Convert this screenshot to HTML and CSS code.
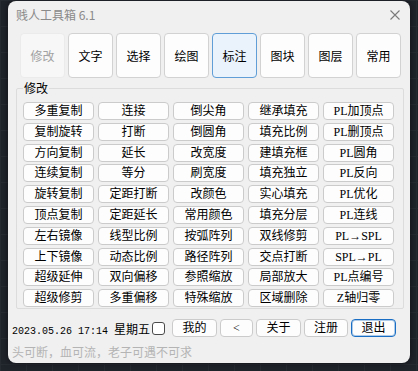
FILE: index.html
```html
<!DOCTYPE html>
<html lang="zh-CN">
<head>
    <meta charset="UTF-8">
    <meta name="viewport" content="width=device-width, initial-scale=1.0">
    <title>贱人工具箱 6.1</title>
    <link rel="stylesheet" href="styles.css">
</head>
<body>
    <div class="window">
        <div class="titlebar">
            <span class="title">贱人工具箱 6.1</span>
            <svg class="close" width="10" height="10" viewBox="0 0 10 10">
                <path d="M0.5 0.5 L9.5 9.5 M9.5 0.5 L0.5 9.5" stroke="#7a7a7a" stroke-width="1.1" fill="none"/>
            </svg>
        </div>

        <div class="tabs">
            <button class="tab disabled">修改</button>
            <button class="tab">文字</button>
            <button class="tab">选择</button>
            <button class="tab">绘图</button>
            <button class="tab active">标注</button>
            <button class="tab">图块</button>
            <button class="tab">图层</button>
            <button class="tab">常用</button>
        </div>

        <fieldset class="group">
            <legend>修改</legend>
            <div class="cmd-grid">
                <button>多重复制</button><button>连接</button><button>倒尖角</button><button>继承填充</button><button>PL加顶点</button>
                <button>复制旋转</button><button>打断</button><button>倒圆角</button><button>填充比例</button><button>PL删顶点</button>
                <button>方向复制</button><button>延长</button><button>改宽度</button><button>建填充框</button><button>PL圆角</button>
                <button>连续复制</button><button>等分</button><button>刷宽度</button><button>填充独立</button><button>PL反向</button>
                <button>旋转复制</button><button>定距打断</button><button>改颜色</button><button>实心填充</button><button>PL优化</button>
                <button>顶点复制</button><button>定距延长</button><button>常用颜色</button><button>填充分层</button><button>PL连线</button>
                <button>左右镜像</button><button>线型比例</button><button>按弧阵列</button><button>双线修剪</button><button>PL→SPL</button>
                <button>上下镜像</button><button>动态比例</button><button>路径阵列</button><button>交点打断</button><button>SPL→PL</button>
                <button>超级延伸</button><button>双向偏移</button><button>参照缩放</button><button>局部放大</button><button>PL点编号</button>
                <button>超级修剪</button><button>多重偏移</button><button>特殊缩放</button><button>区域删除</button><button>Z轴归零</button>
            </div>
        </fieldset>

        <div class="status-row">
            <span class="datetime"><span class="digits">2023.05.26 17:14 </span>星期五</span>
            <span class="check"></span>
            <button class="small mine">我的</button>
            <button class="small back">&lt;</button>
            <button class="small">关于</button>
            <button class="small reg">注册</button>
            <button class="small quit">退出</button>
        </div>

        <p class="motto">头可断，血可流，老子可遇不可求</p>
    </div>
</body>
</html>
```

FILE: styles.css
```css
body {
    margin: 0;
    width: 418px;
    height: 371px;
    overflow: hidden;
    background-color: #1f232a;
    background-image:
        linear-gradient(#262b32 1px, transparent 1px),
        linear-gradient(90deg, #262b32 1px, transparent 1px);
    background-size: 26px 26px;
    font-family: "Noto Sans CJK SC", sans-serif;
    font-size: 12px;
}

.window {
    margin: 1px 0 0 8px;
    width: 402px;
    height: 362px;
    background-color: #f0f0f0;
    border-radius: 8px;
    box-shadow: 0 0 6px rgba(0, 0, 0, 0.5);
    box-sizing: border-box;
}

.titlebar {
    height: 28px;
    display: flex;
    align-items: center;
    justify-content: space-between;
    padding: 0 10px 0 8px;
}

.title {
    color: #8a8a8a;
    font-size: 12px;
    line-height: 16px;
}

.tabs {
    display: flex;
    gap: 3px;
    margin-top: 4px;
    padding-left: 12px;
}

.tab {
    width: 45px;
    height: 45px;
    padding: 0;
    background-color: #fdfdfd;
    border: 1px solid #d2d2d2;
    border-radius: 4px;
    font-family: "Noto Sans CJK SC", sans-serif;
    font-size: 12px;
    color: #000;
}

.tab.disabled {
    background-color: #f7f7f7;
    border-color: #ebebeb;
    color: #a2a2a2;
}

.tab.active {
    background-color: #eaf2fb;
    border-color: #5f9ed6;
}

.group {
    margin: 2px 0 0 8px;
    width: 388px;
    padding: 6px 9px 1px 6px;
    border: 1px solid #dcdcdc;
    border-radius: 2px;
    box-sizing: border-box;
}

.group legend {
    padding: 0 1px;
    margin-left: 0;
    line-height: 16px;
    font-size: 12px;
    color: #000;
}

.cmd-grid {
    display: grid;
    grid-template-columns: repeat(5, 71px);
    grid-template-rows: repeat(10, 18px);
    column-gap: 4px;
    row-gap: 2.8px;
}

.cmd-grid button,
.small {
    height: 18px;
    padding: 0;
    background-color: #fdfdfd;
    border: 1px solid #cbcbcb;
    border-radius: 4px;
    font-family: "Liberation Serif", "Noto Sans CJK SC", serif;
    font-size: 12px;
    line-height: 16px;
    color: #000;
}

.status-row {
    display: flex;
    align-items: center;
    margin-top: 10px;
    padding-left: 4px;
    height: 18px;
}

.datetime {
    width: 140px;
    font-size: 12px;
    color: #000;
    white-space: nowrap;
}

.digits {
    font-family: "Liberation Mono", monospace;
    font-size: 10px;
}

.check {
    width: 11px;
    height: 11px;
    border: 1px solid #4a4a4a;
    border-radius: 3px;
    background-color: #fff;
    margin-right: 7px;
}

.small {
    width: 45px;
    margin-right: 3px;
}

.small.back {
    width: 33px;
}

.small.reg {
    width: 44px;
}

.small.quit {
    border-color: #1a6fc4;
    box-shadow: inset 0 0 0 1px rgba(26, 111, 196, 0.35);
}

.motto {
    margin: 7px 0 0;
    padding-left: 4px;
    line-height: 16px;
    font-size: 12px;
    color: #b4b4b4;
}
```
